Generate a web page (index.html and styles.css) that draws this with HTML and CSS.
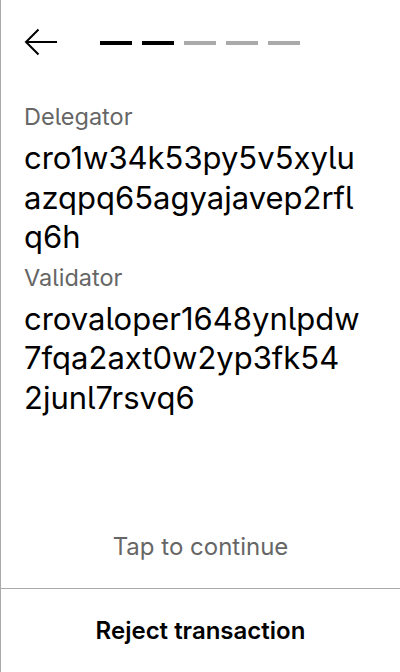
FILE: index.html
```html
<!DOCTYPE html>
<html>
<head>
<meta charset="utf-8">
<link rel="stylesheet" href="styles.css">
</head>
<body>
<div class="screen">
  <div class="header">
    <svg class="back" width="34" height="30" viewBox="0 0 34 30">
      <path d="M33 14H2.5M14.5 1.5L2 14l12.5 12.5" fill="none" stroke="#000" stroke-width="2"/>
    </svg>
    <div class="steps">
      <span class="step done"></span>
      <span class="step done"></span>
      <span class="step"></span>
      <span class="step"></span>
      <span class="step"></span>
    </div>
  </div>
  <div class="content">
    <div class="field">
      <div class="label">Delegator</div>
      <div class="value">cro1w34k53py5v5xylu<br>azqpq65agyajavep2rfl<br>q6h</div>
    </div>
    <div class="field">
      <div class="label">Validator</div>
      <div class="value">crovaloper1648ynlpdw<br>7fqa2axt0w2yp3fk54<br>2junl7rsvq6</div>
    </div>
  </div>
  <div class="tap">Tap to continue</div>
  <div class="footer">Reject transaction</div>
</div>
</body>
</html>
```
FILE: styles.css
```css
html, body {
  margin: 0;
  padding: 0;
  background: #fff;
}
body {
  font-family: Inter, "Noto Sans", sans-serif;
  color: #000;
  font-feature-settings: "cv05" 1;
}
.screen {
  width: 399px;
  height: 672px;
  border-left: 1px solid #aaa;
  display: flex;
  flex-direction: column;
}
.header {
  display: flex;
  align-items: center;
  padding: 29px 0 0 23px;
  height: 28px;
}
.back {
  display: block;
}
.steps {
  display: flex;
  gap: 10px;
  margin-left: 42px;
}
.step {
  width: 32px;
  height: 4px;
  background: #aaa;
}
.step.done {
  background: #000;
}
.content {
  padding: 46px 23px 0 23px;
  display: flex;
  flex-direction: column;
  gap: 7px;
}
.label {
  font-size: 23.5px;
  line-height: 28px;
  color: #666;
}
.value {
  font-size: 31px;
  line-height: 39.5px;
  margin-top: 7px;
}
.tap {
  margin-top: auto;
  text-align: center;
  font-size: 24px;
  line-height: 30px;
  color: #666;
  padding-bottom: 26px;
}
.footer {
  border-top: 1px solid #aaa;
  height: 83px;
  display: flex;
  align-items: center;
  justify-content: center;
  font-size: 24px;
  font-weight: 600;
}
```
